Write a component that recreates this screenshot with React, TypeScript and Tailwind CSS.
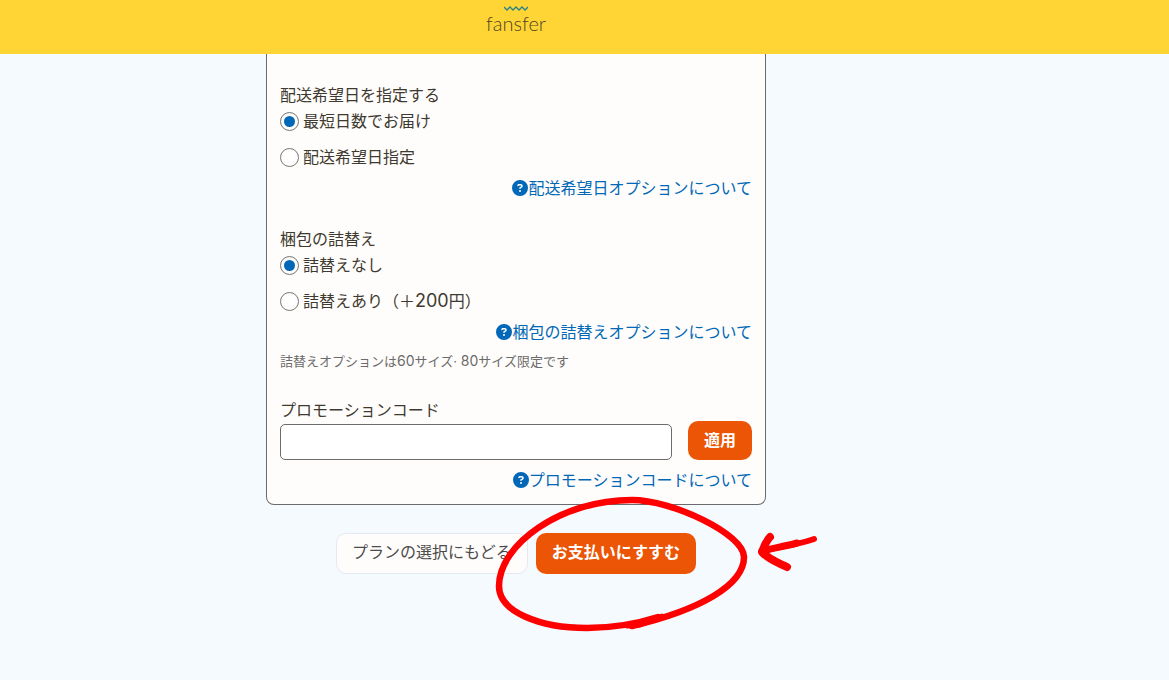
import { useState, type ReactNode } from 'react';
import { FaCircleQuestion } from 'react-icons/fa6';

interface Option {
  value: string;
  label: ReactNode;
}

const deliveryOptions: Option[] = [
  { value: 'fastest', label: '最短日数でお届け' },
  { value: 'specified', label: '配送希望日指定' },
];

const repackOptions: Option[] = [
  { value: 'none', label: '詰替えなし' },
  {
    value: 'repack',
    label: (
      <>
        詰替えあり（＋<span className="font-[Inter] text-lg leading-6">200</span>円）
      </>
    ),
  },
];

function HelpLink({ children }: { children: ReactNode }) {
  return (
    <a href="#help" className="flex h-6 items-center justify-end text-[#0068b7]">
      <FaCircleQuestion className="size-4" />
      <span className="pb-0.5">{children}</span>
    </a>
  );
}

interface RadioGroupProps {
  name: string;
  legend: string;
  options: Option[];
  value: string;
  onChange: (value: string) => void;
}

function RadioGroup({ name, legend, options, value, onChange }: RadioGroupProps) {
  return (
    <fieldset>
      <legend className="mb-[3px]">{legend}</legend>
      <div className="space-y-3">
        {options.map((option) => (
          <label key={option.value} className="flex h-6 items-center gap-1">
            <input
              type="radio"
              name={name}
              value={option.value}
              checked={value === option.value}
              onChange={() => onChange(option.value)}
              className="size-[19px] shrink-0 appearance-none rounded-full border border-[#767676] bg-white bg-clip-content p-[3px] checked:bg-[#0068b7]"
            />
            <span className="pb-0.5">{option.label}</span>
          </label>
        ))}
      </div>
    </fieldset>
  );
}

// Hand-drawn circle and arrow around the payment button
function HandDrawnMark() {
  return (
    <svg
      viewBox="490 490 340 150"
      className="pointer-events-none absolute -top-[43px] -left-[46px] h-[150px] w-[340px] max-w-none"
      fill="none"
      stroke="#ff0000"
      strokeLinecap="round"
      strokeLinejoin="round"
      aria-hidden="true"
    >
      <path
        d="M658 617C636 624 612 628 587 628C540 628 499 612 499 586C499 545 560 500 632 500C672 500 744 534 744 557C744 585 700 610 632 626"
        strokeWidth="6.5"
      />
      <path d="M627 626L640 625L662 616" strokeWidth="5" />
      <path d="M762 552C776 546 795 546 814 539" strokeWidth="6" />
      <path d="M762 551C774 548 786 546 797 543" strokeWidth="7" />
      <path d="M770 537C766 541 764 547 762 552C769 560 779 563 787 567" strokeWidth="8" />
    </svg>
  );
}

export default function App() {
  const [delivery, setDelivery] = useState('fastest');
  const [repack, setRepack] = useState('none');
  const [promoCode, setPromoCode] = useState('');

  return (
    <div className="min-h-screen overflow-x-hidden bg-[#f5faff] font-['Noto_Sans_CJK_JP',sans-serif] text-base text-[#3e3a30]">
      {/* Header */}
      <header className="flex h-[54px] flex-col items-center bg-[#ffd535] pt-1.5 pr-[137px]">
        <svg viewBox="0 0 24 5" className="h-[5px] w-6" fill="none" stroke="#27838c" strokeWidth="1.3" aria-hidden="true">
          <path d="M0 1L3 4L6 1L9 4L12 1L15 4L18 1L21 4L24 1" />
        </svg>
        <span className="font-[Lato] text-xl leading-6 font-light text-[#4f4426]">fansfer</span>
      </header>

      <main className="pr-[137px]">
        <form className="mx-auto max-w-[500px]" onSubmit={(e) => e.preventDefault()}>
          {/* Shipping options */}
          <div className="rounded-b-lg border border-t-0 border-[#6b6b6b] bg-[#fffdfb] px-[13px] pt-7 pb-3">
            <RadioGroup
              name="delivery"
              legend="配送希望日を指定する"
              options={deliveryOptions}
              value={delivery}
              onChange={setDelivery}
            />
            <div className="mt-[7px] mb-[26px]">
              <HelpLink>配送希望日オプションについて</HelpLink>
            </div>

            <RadioGroup
              name="repack"
              legend="梱包の詰替え"
              options={repackOptions}
              value={repack}
              onChange={setRepack}
            />
            <div className="mt-[7px] mb-[5px]">
              <HelpLink>梱包の詰替えオプションについて</HelpLink>
            </div>
            <p className="mb-6 text-[13px] leading-6 text-[#6b6b6b]">
              詰替えオプションは<span className="font-[Inter] text-sm leading-6">60</span>サイズ
              <span className="font-[Inter]">·</span>
              <span className="font-[Inter] text-sm leading-6"> 80</span>サイズ限定です
            </p>

            {/* Promotion code */}
            <label htmlFor="promo" className="block">
              プロモーションコード
            </label>
            <div className="mb-2 flex items-end gap-4">
              <input
                id="promo"
                type="text"
                value={promoCode}
                onChange={(e) => setPromoCode(e.target.value)}
                className="h-9 min-w-0 flex-1 rounded-[5px] border border-[#6b6b6b] bg-white px-3"
              />
              <button type="button" className="h-[39px] rounded-[10px] bg-[#eb5505] px-4 pb-1 font-bold text-white">
                適用
              </button>
            </div>
            <HelpLink>プロモーションコードについて</HelpLink>
          </div>

          <div className="mt-7 flex justify-center gap-2">
            <button
              type="button"
              className="h-[41px] rounded-[10px] border border-[#e4e9f1] bg-[#fffdfb] px-[15px] pb-1.5 text-[#4b4b4b]"
            >
              プランの選択にもどる
            </button>
            <div className="relative">
              <button type="submit" className="h-[41px] rounded-[10px] bg-[#eb5505] px-4 pb-1.5 font-bold text-white">
                お支払いにすすむ
              </button>
              <HandDrawnMark />
            </div>
          </div>
        </form>
      </main>
    </div>
  );
}
